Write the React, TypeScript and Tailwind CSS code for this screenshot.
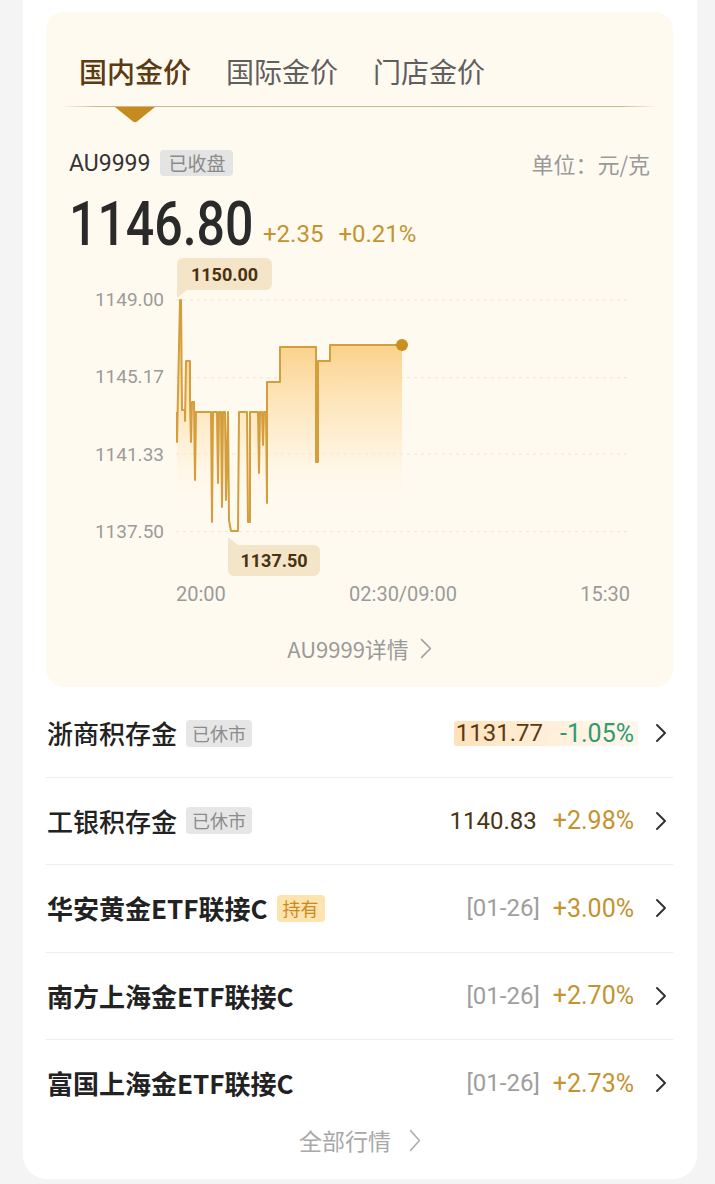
import React from "react";

const LINE =
  "M177 412 L177 442 L178 393 L180 300 L181 300 L182 410 L185 410 L185 421 L186 361 L190 361 L190 402 L191 442 L192 402 L194 402 L195 480 L196 412 L211 412 L212 522 L213 412 L217 412 L218 483 L219 412 L221 412 L222 507 L223 412 L225 412 L226 500 L228 412 L229 520 L231 531 L238 531 L239 412 L247 412 L248 522 L250 522 L250 412 L258 412 L259 473 L260 412 L262 412 L263 445 L264 412 L266 412 L267 503 L267 382 L280 382 L280 347 L316 347 L316 462 L318 462 L318 361 L330 361 L330 345 L402 345";

function Chevron({ w, h, color, sw }: { w: number; h: number; color: string; sw: number }) {
  return (
    <svg width={w} height={h} viewBox={`0 0 ${w} ${h}`} fill="none" className="shrink-0">
      <path
        d={`M${sw} ${sw} L${w - sw} ${h / 2} L${sw} ${h - sw}`}
        stroke={color}
        strokeWidth={sw}
        strokeLinecap="round"
        strokeLinejoin="round"
      />
    </svg>
  );
}

type Row = {
  name: string;
  badge?: string;
  gold?: boolean;
  price?: string;
  date?: string;
  pct: string;
  down?: boolean;
  highlight?: boolean;
  bold?: boolean;
};

const rows: Row[] = [
  { name: "浙商积存金", badge: "已休市", price: "1131.77", pct: "-1.05%", down: true, highlight: true },
  { name: "工银积存金", badge: "已休市", price: "1140.83", pct: "+2.98%" },
  { name: "华安黄金ETF联接C", badge: "持有", gold: true, date: "[01-26]", pct: "+3.00%", bold: true },
  { name: "南方上海金ETF联接C", date: "[01-26]", pct: "+2.70%", bold: true },
  { name: "富国上海金ETF联接C", date: "[01-26]", pct: "+2.73%", bold: true },
];

function Chart() {
  return (
    <svg width={454} height={255} viewBox="0 0 454 255" className="ml-[12px] shrink-0">
      <defs>
        <linearGradient id="fillg" x1="0" y1="340" x2="0" y2="515" gradientUnits="userSpaceOnUse">
          <stop offset="0" stopColor="#fbcd80" stopOpacity="0.95" />
          <stop offset="0.55" stopColor="#fde6bd" stopOpacity="0.6" />
          <stop offset="1" stopColor="#fffaf0" stopOpacity="0" />
        </linearGradient>
      </defs>
      {[10, 87.7, 164, 241.7].map((y) => (
        <line key={y} x1={0} x2={454} y1={y} y2={y} stroke="#ede5d5" strokeWidth={1} strokeDasharray="3 4" />
      ))}
      <g transform="translate(-176,-290)">
        <path d={`${LINE} L402 545 L177 545 Z`} fill="url(#fillg)" />
        <path d={LINE} fill="none" stroke="#d49e3c" strokeWidth={2} strokeLinejoin="round" />
        <circle cx={402} cy={345} r={6} fill="#c8901f" />
      </g>
    </svg>
  );
}

export default function App() {
  return (
    <div className="min-h-[1184px] bg-[#f4f4f4] font-['Noto_Sans_CJK_SC',sans-serif]">
      <div className="ml-[23px] mr-[18px] bg-white rounded-b-[24px] pt-[12px] pb-[24px]">
        {/* Cream panel */}
        <div className="ml-[23px] mr-[24px] rounded-[18px] bg-[#fffaf0] pb-[23px]">
          {/* Tabs */}
          <div className="flex gap-[35px] pl-[33px] pt-[45px] text-[28px] leading-[28px]">
            <span className="text-[#5c3b12] font-medium">国内金价</span>
            <span className="text-[#5f5f5f]">国际金价</span>
            <span className="text-[#5f5f5f]">门店金价</span>
          </div>
          <div className="mx-[15px] mt-[21px] h-px bg-[linear-gradient(to_right,transparent,#cbb98f_6%,#cbb98f_94%,transparent)]" />
          <div className="ml-[67px] h-[16px]">
            <svg width={44} height={16} viewBox="0 0 44 16">
              <path d="M2 0 L42 0 L24 14.5 Q22 16 20 14.5 Z" fill="#c68a1e" />
            </svg>
          </div>

          {/* Symbol row */}
          <div className="mt-[27px] flex h-[26px] items-center justify-between px-[23px]">
            <div className="flex items-center">
              <span className="font-['Roboto',sans-serif] text-[23px] leading-none text-[#333]">AU9999</span>
              <span className="ml-[10px] h-[26px] rounded-[4px] bg-[#e4e4e4] px-[8px] text-[19px] leading-[26px] text-[#8b8b8b]">
                已收盘
              </span>
            </div>
            <span className="text-[22px] leading-none text-[#9a9a9a]">单位：元/克</span>
          </div>

          {/* Price row */}
          <div className="mt-[18px] flex items-end px-[23px]">
            <span className="inline-block w-[194px]">
              <span className="block origin-left scale-x-[0.82] whitespace-nowrap font-['Roboto',sans-serif] text-[61px] font-medium leading-none text-[#2a2a2a]">
                1146.80
              </span>
            </span>
            <div className="flex gap-[15px] pb-[9px] font-['Roboto',sans-serif] text-[24px] leading-none text-[#c4932e]">
              <span>+2.35</span>
              <span>+0.21%</span>
            </div>
          </div>

          {/* Chart */}
          <div className="relative px-[23px] pt-[35px] font-['Roboto',sans-serif]">
            <div className="flex items-start">
              <div className="flex h-[252px] w-[95px] flex-col items-end justify-between text-[19px] leading-[20px] text-[#9b9b9b]">
                <span>1149.00</span>
                <span>1145.17</span>
                <span>1141.33</span>
                <span>1137.50</span>
              </div>
              <Chart />
            </div>
            <div className="ml-[107px] mt-[39px] flex w-[454px] justify-between text-[20px] leading-[20px] text-[#9b9b9b]">
              <span>20:00</span>
              <span>02:30/09:00</span>
              <span>15:30</span>
            </div>

            {/* max tooltip */}
            <div className="absolute left-[131px] top-[3px]">
              <div className="flex h-[32px] w-[95px] items-center justify-center rounded-[6px] rounded-bl-none bg-[#f4e5c9] text-[18px] font-bold text-[#4a3210]">
                1150.00
              </div>
              <svg width={10} height={8} viewBox="0 0 10 8" className="block">
                <path d="M0 0 L10 0 L0 8 Z" fill="#f4e5c9" />
              </svg>
            </div>
            {/* min tooltip */}
            <div className="absolute left-[182px] top-[282px]">
              <svg width={10} height={8} viewBox="0 0 10 8" className="block">
                <path d="M0 0 L10 8 L0 8 Z" fill="#f4e5c9" />
              </svg>
              <div className="flex h-[31px] w-[92px] items-center justify-center rounded-[6px] rounded-tl-none bg-[#f4e5c9] text-[18px] font-bold text-[#4a3210]">
                1137.50
              </div>
            </div>
          </div>

          {/* Detail link */}
          <div className="mt-[30px] flex h-[28px] items-center justify-center text-[22px] leading-none text-[#9a9a9a]">
            <span>AU9999详情</span>
            <span className="ml-[11px]">
              <Chevron w={12} h={21} color="#a0a0a0" sw={1.6} />
            </span>
          </div>
          <div className="h-[2px]" />
        </div>

        {/* List */}
        <div className="ml-[23px] mr-[24px] mt-[3px]">
          {rows.map((r, i) => (
            <div
              key={r.name}
              className={`flex items-center pl-[1px] pr-[6px] ${
                i < rows.length - 1 ? "h-[87.5px] border-b border-[#eeeeee]" : "h-[86.5px]"
              }`}
            >
              <span
                className={`text-[26px] leading-[30px] text-[#222] ${r.bold ? "font-bold" : "font-medium"}`}
              >
                {r.name}
              </span>
              {r.badge && (
                <span
                  className={`ml-[9px] h-[27px] rounded-[4px] px-[6px] text-[18px] leading-[27px] ${
                    r.gold ? "bg-[#fde3ad] text-[#c98b1f]" : "bg-[#e6e6e6] text-[#8c8c8c]"
                  }`}
                >
                  {r.badge}
                </span>
              )}
              <div className="ml-auto flex items-center">
                {r.highlight ? (
                  <div className="flex h-[25px] items-center rounded-[3px] bg-[linear-gradient(to_right,#fde2ba,#fff0dc_55%,#fff7ec)] pl-[2px] pr-[4px] font-['Roboto',sans-serif] leading-none">
                    <span className="text-[24px] text-[#5b3a12]">{r.price}</span>
                    <span className="ml-[17px] text-[25px] text-[#2f9b74]">{r.pct}</span>
                  </div>
                ) : (
                  <div className="flex items-center font-['Roboto',sans-serif] leading-none">
                    {r.price && <span className="text-[24px] text-[#4a3413]">{r.price}</span>}
                    {r.date && <span className="text-[24px] text-[#9e9e9e]">{r.date}</span>}
                    <span className={`${r.price ? "ml-[16px]" : "ml-[13px]"} text-[25px] text-[#c4932e]`}>
                      {r.pct}
                    </span>
                  </div>
                )}
                <span className={r.highlight ? "ml-[17px]" : "ml-[21px]"}>
                  <Chevron w={12} h={20} color="#333333" sw={2} />
                </span>
              </div>
            </div>
          ))}
        </div>

        {/* All markets */}
        <div className="flex h-[28px] items-center justify-center text-[23px] leading-none text-[#a8a8a8]">
          <span>全部行情</span>
          <span className="ml-[18px]">
            <Chevron w={12} h={23} color="#b0b0b0" sw={1.6} />
          </span>
        </div>
      </div>
    </div>
  );
}
